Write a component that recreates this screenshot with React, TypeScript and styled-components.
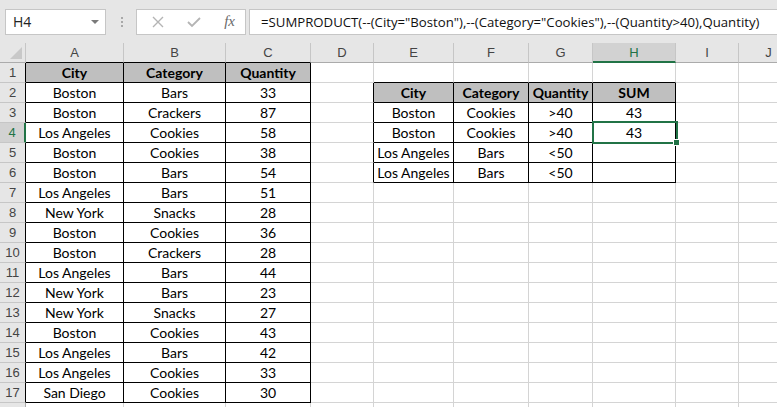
import React from "react";
import styled, { createGlobalStyle } from "styled-components";

const GlobalStyle = createGlobalStyle`
    body {
        margin: 0;
        background: #ffffff;
        overflow: hidden;
        font-family: "Lato", "Liberation Sans", sans-serif;
    }
`;

const COLS = ["A", "B", "C", "D", "E", "F", "G", "H", "I", "J"];
const COL_WIDTHS = [98, 102, 85, 63, 80, 75, 64, 83, 63, 60];
const ROW_COUNT = 18;
const SELECTED = { row: 4, col: 8 };

type Grid = Record<string, string>;

const mainTable: string[][] = [
    ["City", "Category", "Quantity"],
    ["Boston", "Bars", "33"],
    ["Boston", "Crackers", "87"],
    ["Los Angeles", "Cookies", "58"],
    ["Boston", "Cookies", "38"],
    ["Boston", "Bars", "54"],
    ["Los Angeles", "Bars", "51"],
    ["New York", "Snacks", "28"],
    ["Boston", "Cookies", "36"],
    ["Boston", "Crackers", "28"],
    ["Los Angeles", "Bars", "44"],
    ["New York", "Bars", "23"],
    ["New York", "Snacks", "27"],
    ["Boston", "Cookies", "43"],
    ["Los Angeles", "Bars", "42"],
    ["Los Angeles", "Cookies", "33"],
    ["San Diego", "Cookies", "30"],
];

const criteriaTable: string[][] = [
    ["City", "Category", "Quantity", "SUM"],
    ["Boston", "Cookies", ">40", "43"],
    ["Boston", "Cookies", ">40", "43"],
    ["Los Angeles", "Bars", "<50", ""],
    ["Los Angeles", "Bars", "<50", ""],
];

const values: Grid = {};
mainTable.forEach((row, r) => row.forEach((v, c) => (values[`${r + 1}:${c + 1}`] = v)));
criteriaTable.forEach((row, r) => row.forEach((v, c) => (values[`${r + 2}:${c + 5}`] = v)));

function inTable(row: number, col: number) {
    return (row >= 1 && row <= 17 && col >= 1 && col <= 3) || (row >= 2 && row <= 6 && col >= 5 && col <= 8);
}

function isHeader(row: number, col: number) {
    return (row === 1 && col >= 1 && col <= 3) || (row === 2 && col >= 5 && col <= 8);
}

const Window = styled.div`
    width: 777px;
    height: 407px;
    overflow: hidden;
    background: #e6e6e6;
`;

const FormulaBar = styled.div`
    display: flex;
    align-items: center;
    height: 43px;
    padding: 0 0 0 5px;
    box-sizing: border-box;
`;

const NameBox = styled.div`
    display: flex;
    align-items: center;
    justify-content: space-between;
    width: 101px;
    height: 26px;
    box-sizing: border-box;
    border: 1px solid #c6c6c6;
    background: #ffffff;
    padding: 0 6px 0 7px;
    font-family: "Open Sans", "Liberation Sans", sans-serif;
    font-size: 14px;
    color: #222222;
`;

const DropArrow = styled.span`
    width: 0;
    height: 0;
    border-left: 4px solid transparent;
    border-right: 4px solid transparent;
    border-top: 4px solid #7a7a7a;
`;

const Grip = styled.div`
    display: flex;
    flex-direction: column;
    gap: 2px;
    margin: 0 13px 0 15px;

    span {
        width: 2px;
        height: 2px;
        background: #a8a8a8;
    }
`;

const FxButtons = styled.div`
    display: flex;
    align-items: center;
    justify-content: space-between;
    width: 110px;
    height: 26px;
    box-sizing: border-box;
    border: 1px solid #c6c6c6;
    background: #ffffff;
    padding: 0 10px 0 15px;
    margin-right: 3px;
`;

const FxLabel = styled.span`
    font-family: "Liberation Serif", serif;
    font-style: italic;
    font-size: 15px;
    color: #6a6a6a;
`;

const FormulaInput = styled.div`
    flex: 1;
    height: 26px;
    box-sizing: border-box;
    border: 1px solid #c6c6c6;
    border-right: none;
    background: #ffffff;
    padding: 0 0 0 11px;
    display: flex;
    align-items: center;
    white-space: nowrap;
    overflow: hidden;
    font-family: "Open Sans", "Liberation Sans", sans-serif;
    font-size: 13.2px;
    color: #111111;
`;

const Sheet = styled.div`
    display: grid;
    grid-template-columns: 26px ${COL_WIDTHS.map((w) => `${w}px`).join(" ")};
    grid-template-rows: 20px repeat(${ROW_COUNT}, 20px);
    background: #ffffff;
`;

const Corner = styled.div`
    position: relative;
    background: #e6e6e6;
    border-right: 1px solid #c6c6c6;
    border-bottom: 1px solid #ababab;
    box-sizing: border-box;

    &::after {
        content: "";
        position: absolute;
        right: 3px;
        bottom: 3px;
        border-left: 12px solid transparent;
        border-bottom: 12px solid #c8c8c8;
    }
`;

const ColHeader = styled.div<{ $selected: boolean; $dark: boolean }>`
    display: flex;
    align-items: center;
    justify-content: center;
    box-sizing: border-box;
    background: ${(p) => (p.$selected ? "#d2d2d2" : "#e6e6e6")};
    color: ${(p) => (p.$selected ? "#217346" : "#444444")};
    border-right: 1px solid #c6c6c6;
    border-bottom: ${(p) => (p.$selected ? "2px solid #217346" : p.$dark ? "1px solid #000000" : "1px solid #ababab")};
    font-family: "Liberation Sans", sans-serif;
    font-size: 13px;
`;

const RowHeader = styled.div<{ $selected: boolean; $dark: boolean }>`
    display: flex;
    align-items: center;
    justify-content: center;
    box-sizing: border-box;
    background: ${(p) => (p.$selected ? "#d2d2d2" : "#e6e6e6")};
    color: ${(p) => (p.$selected ? "#217346" : "#444444")};
    border-right: ${(p) => (p.$selected ? "2px solid #217346" : p.$dark ? "1px solid #000000" : "1px solid #ababab")};
    border-bottom: 1px solid #c6c6c6;
    font-family: "Liberation Sans", sans-serif;
    font-size: 13px;
`;

const Cell = styled.div<{ $header: boolean; $right: string; $bottom: string }>`
    position: relative;
    display: flex;
    align-items: center;
    justify-content: center;
    box-sizing: border-box;
    background: ${(p) => (p.$header ? "#bfbfbf" : "#ffffff")};
    border-right: 1px solid ${(p) => p.$right};
    border-bottom: 1px solid ${(p) => p.$bottom};
    font-size: 14px;
    font-weight: ${(p) => (p.$header ? 700 : 400)};
    color: #000000;
    white-space: nowrap;
`;

const Selection = styled.div`
    position: absolute;
    z-index: 2;
    left: -1px;
    top: -2px;
    right: -3px;
    bottom: -2px;
    border: 2px solid #217346;
    pointer-events: none;

    &::after {
        content: "";
        position: absolute;
        right: -4px;
        bottom: -4px;
        width: 5px;
        height: 5px;
        background: #217346;
        border: 1px solid #ffffff;
    }
`;

function CrossIcon() {
    return (
        <svg width="12" height="12" viewBox="0 0 12 12">
            <path d="M1 1 L11 11 M11 1 L1 11" stroke="#b4b4b4" strokeWidth="1.4" fill="none"/>
        </svg>
    );
}

function CheckIcon() {
    return (
        <svg width="14" height="12" viewBox="0 0 14 12">
            <path d="M1 6 L5 10 L13 2" stroke="#b4b4b4" strokeWidth="1.8" fill="none"/>
        </svg>
    );
}

export default function App() {
    const rows = Array.from({ length: ROW_COUNT }, (_, i) => i + 1);

    return (
        <Window>
            <GlobalStyle/>
            <FormulaBar>
                <NameBox>
                    <span>H4</span>
                    <DropArrow/>
                </NameBox>
                <Grip><span/><span/><span/></Grip>
                <FxButtons>
                    <CrossIcon/>
                    <CheckIcon/>
                    <FxLabel>fx</FxLabel>
                </FxButtons>
                <FormulaInput>
                    =SUMPRODUCT(--(City="Boston"),--(Category="Cookies"),--(Quantity&gt;40),Quantity)
                </FormulaInput>
            </FormulaBar>

            <Sheet>
                <Corner/>
                {COLS.map((name, i) => (
                    <ColHeader key={name} $selected={i + 1 === SELECTED.col} $dark={inTable(1, i + 1)}>
                        {name}
                    </ColHeader>
                ))}
                {rows.map((r) => (
                    <React.Fragment key={r}>
                        <RowHeader $selected={r === SELECTED.row} $dark={inTable(r, 1)}>
                            {r <= 17 ? r : ""}
                        </RowHeader>
                        {COLS.map((_, i) => {
                            const c = i + 1;
                            const right = inTable(r, c) || inTable(r, c + 1) ? "#000000" : "#d4d4d4";
                            const bottom = inTable(r, c) || inTable(r + 1, c) ? "#000000" : "#d4d4d4";
                            return (
                                <Cell key={c} $header={isHeader(r, c)} $right={right} $bottom={bottom}>
                                    {values[`${r}:${c}`] ?? ""}
                                    {r === SELECTED.row && c === SELECTED.col && <Selection/>}
                                </Cell>
                            );
                        })}
                    </React.Fragment>
                ))}
            </Sheet>
        </Window>
    );
}
